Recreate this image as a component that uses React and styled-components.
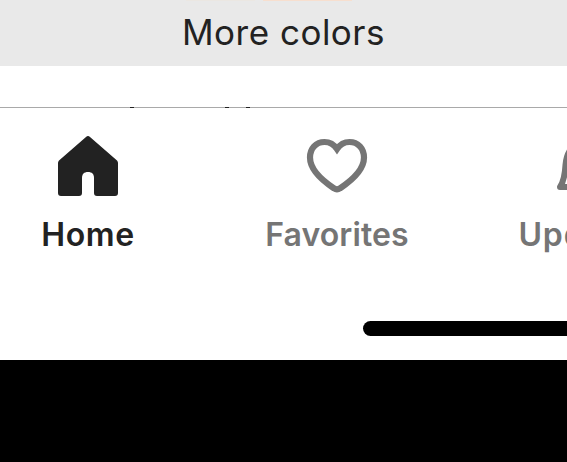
import React from "react";
import styled, { createGlobalStyle } from "styled-components";

const GlobalStyle = createGlobalStyle`
  * { box-sizing: border-box; }
  body { margin: 0; overflow: hidden; background: #000; font-family: Inter, "Liberation Sans", sans-serif; }
`;

const Screen = styled.main`
  width: 567px;
  height: 462px;
  display: flex;
  flex-direction: column;
  overflow: hidden;
  background: #000;
`;

const ColorCard = styled.section`
  position: relative;
  flex: 0 0 66px;
  display: flex;
  justify-content: center;
  background: #e9e9e9;
`;

const Swatch = styled.span`
  position: absolute;
  top: 0;
  left: ${(p) => p.$left}px;
  width: ${(p) => p.$width}px;
  height: ${(p) => p.$height}px;
  background: ${(p) => p.$color};
`;

const CardTitle = styled.span`
  height: 66px;
  line-height: 65px;
  font-size: 35px;
  font-weight: 400;
  letter-spacing: ${(p) => p.$tracking}px;
  color: #222;
  white-space: nowrap;
`;

const ContentPeek = styled.section`
  position: relative;
  flex: 0 0 41px;
  background: #fff;
`;

const ClippedStem = styled.span`
  position: absolute;
  top: 41px;
  left: ${(p) => p.$left}px;
  width: 4px;
  height: 1px;
  background: #222;
  z-index: 1;
`;

const TabBar = styled.nav`
  flex: 0 0 253px;
  display: flex;
  flex-direction: column;
  justify-content: space-between;
  overflow: hidden;
  border-top: 1px solid #a9a9a9;
  background: #fff;
`;

const Tabs = styled.div`
  display: grid;
  grid-template-columns: repeat(3, 249px);
  margin-left: -36.5px;
`;

const Tab = styled.div`
  display: flex;
  flex-direction: column;
  align-items: center;
  padding-top: 24px;
  color: ${(p) => (p.$active ? "#222" : "#757575")};
`;

const TabIcon = styled.svg`
  width: 72px;
  height: 72px;
  display: block;
`;

const TabLabel = styled.span`
  margin-top: 11px;
  line-height: 40px;
  font-size: 32px;
  font-weight: 600;
  letter-spacing: ${(p) => p.$tracking}px;
  white-space: nowrap;
`;

const HomeIndicator = styled.div`
  width: 418px;
  height: 15px;
  flex-shrink: 0;
  margin: 0 0 24px 363px;
  border-radius: 8px;
  background: #000;
`;

function HomeIcon() {
  return (
    <TabIcon viewBox="0 0 72 72" fill="currentColor">
      <path d="M34 5Q36 3 38 5L65 28.5Q66 29.5 66 31V61Q66 64 63 64H45Q42 64 42 61V46C42 42 40 40 36 40C32 40 30 42 30 46V61Q30 64 27 64H9Q6 64 6 61V31Q6 29.5 7 28.5Z" />
    </TabIcon>
  );
}

function HeartIcon() {
  return (
    <TabIcon viewBox="0 0 72 72" fill="none" stroke="currentColor" strokeWidth="6.2" strokeLinejoin="miter">
      <path d="M36 17C33 12.5 28.5 10 23.5 10C15 10 9 16.5 9 25.5C9 37.5 22 49 33 56.3Q36 58.5 39 56.3C50 49 63 37.5 63 25.5C63 16.5 57 10 48.5 10C43.5 10 39 12.5 36 17Z" />
    </TabIcon>
  );
}

function BellIcon() {
  return (
    <TabIcon viewBox="0 0 72 72" fill="none" stroke="currentColor" strokeWidth="6" strokeLinejoin="round">
      <path d="M10 55C13.5 50 15 42 15.5 33C16.5 19 24 10 36 10C48 10 55.5 19 56.5 33C57 42 58.5 50 62 55Z" />
      <path d="M28 61Q36 69 44 61" />
    </TabIcon>
  );
}

export default function App() {
  return (
    <Screen>
      <GlobalStyle />
      <ColorCard>
        <Swatch $left={186} $width={69} $height={1} $color="#ebe7e2" />
        <Swatch $left={263} $width={89} $height={1} $color="#f7dfcf" />
        <CardTitle $tracking={0.5}>More colors</CardTitle>
      </ColorCard>
      <ContentPeek>
        <ClippedStem $left={130} />
        <ClippedStem $left={225} />
        <ClippedStem $left={246} />
      </ContentPeek>
      <TabBar>
        <Tabs>
          <Tab $active>
            <HomeIcon />
            <TabLabel $tracking={0.6}>Home</TabLabel>
          </Tab>
          <Tab>
            <HeartIcon />
            <TabLabel $tracking={0.1}>Favorites</TabLabel>
          </Tab>
          <Tab>
            <BellIcon />
            <TabLabel $tracking={0.8}>Updates</TabLabel>
          </Tab>
        </Tabs>
        <HomeIndicator />
      </TabBar>
    </Screen>
  );
}
